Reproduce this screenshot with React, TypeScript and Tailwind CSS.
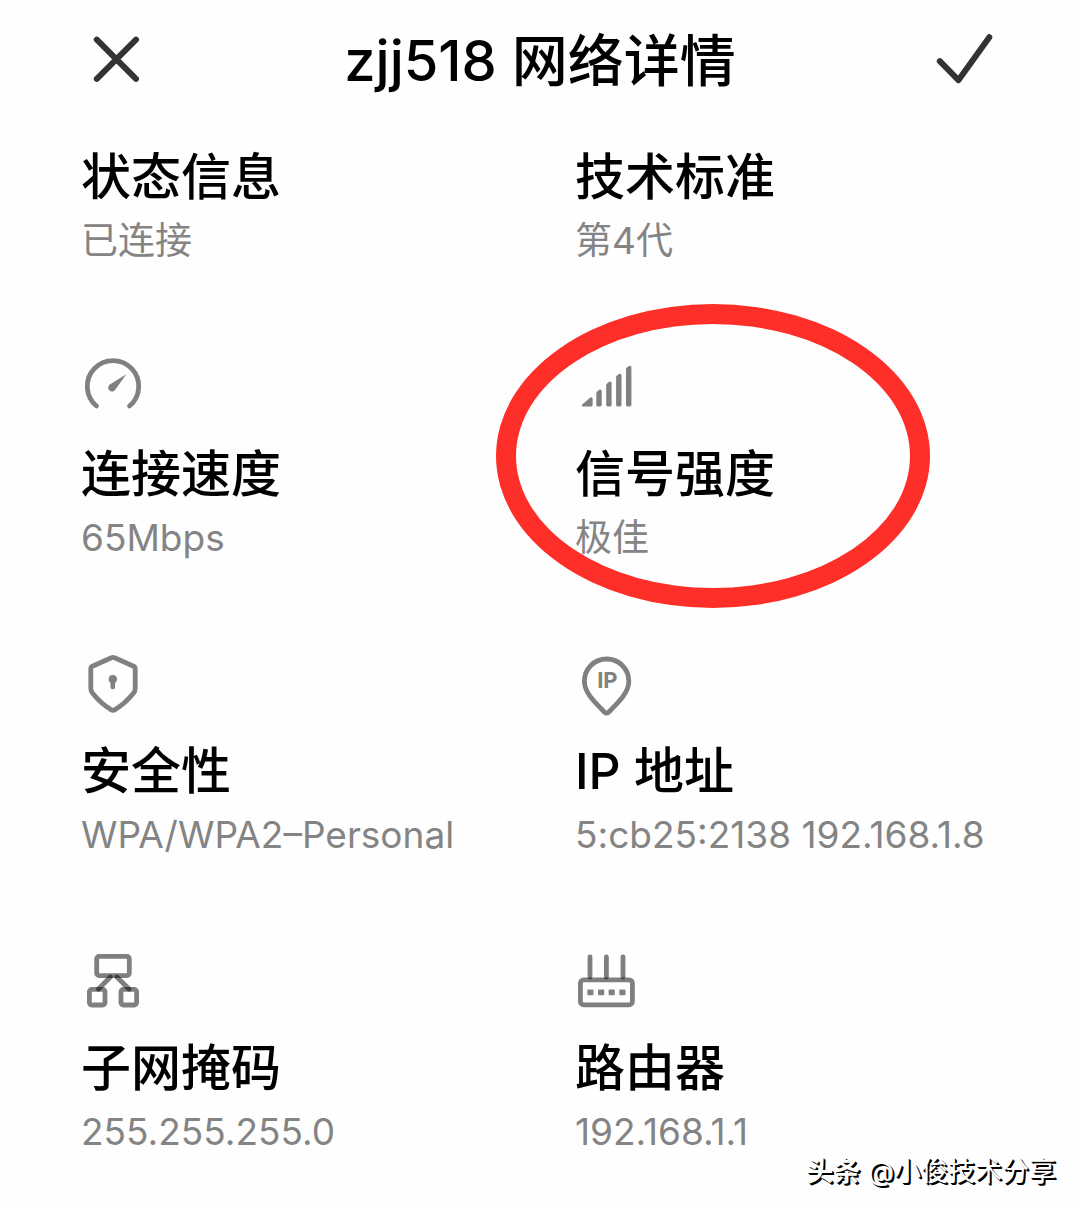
import type { ReactNode } from 'react';

type Detail = {
  title: string;
  value: string;
  icon?: ReactNode;
  highlighted?: boolean;
};

const iconProps = {
  viewBox: '0 0 64 64',
  fill: 'none',
  'aria-hidden': true,
  className: 'block size-16 overflow-visible',
} as const;

function GaugeIcon() {
  return (
    <svg {...iconProps}>
      <path d="M15.5 52A25.7 25.7 0 1 1 48.5 52" stroke="#808080" strokeWidth="4.8" strokeLinecap="round" />
      <path d="M45.3 20.3L34.4 35.4A3.8 3.8 0 1 1 28.8 30.6Z" fill="#808080" />
    </svg>
  );
}

function SignalIcon() {
  return (
    <svg {...iconProps} fill="#808080">
      <path d="M7.2 50.4L15.4 43.6Q17.6 42.4 17.6 45V51Q17.6 52.4 16.2 52.4H8Q6 52 7.2 50.4Z" />
      <path d="M21.3 39.2Q21.3 38.2 22.2 37.4L24.2 35.8Q26.7 34.8 26.7 37.4V51Q26.7 52.4 25.3 52.4H22.7Q21.3 52.4 21.3 51Z" />
      <path d="M31.2 31.2Q31.2 30.2 32.1 29.4L34.1 27.8Q36.6 26.8 36.6 29.4V51Q36.6 52.4 35.2 52.4H32.6Q31.2 52.4 31.2 51Z" />
      <path d="M41.1 23.4Q41.1 22.4 42 21.6L44 20Q46.5 19 46.5 21.6V51Q46.5 52.4 45.1 52.4H42.5Q41.1 52.4 41.1 51Z" />
      <path d="M51 15.4Q51 14.4 51.9 13.6L53.9 12Q56.4 11 56.4 13.6V51Q56.4 52.4 55 52.4H52.4Q51 52.4 51 51Z" />
    </svg>
  );
}

function ShieldIcon() {
  return (
    <svg {...iconProps}>
      <path
        d="M30.4 6.8Q32 6 33.6 6.8L52.6 15.2Q54.2 16 54.2 17.8V37.5Q54.2 40 52.6 42C47 49 41 54.5 34 58.6Q32 59.8 30 58.6C23 54.5 17 49 11.4 42Q9.8 40 9.8 37.5V17.8Q9.8 16 11.4 15.2Z"
        stroke="#808080"
        strokeWidth="4.8"
        strokeLinejoin="round"
      />
      <circle cx="31.8" cy="28.2" r="4.1" fill="#808080" />
      <path d="M31.8 29V36" stroke="#808080" strokeWidth="4.6" strokeLinecap="round" />
    </svg>
  );
}

function IpPinIcon() {
  return (
    <svg {...iconProps}>
      <path
        d="M31.6 8C19.2 8 9.4 17.8 9.4 30.2C9.4 42 20 51.5 29.6 61.2Q31.6 63 33.6 61.2C43.2 51.5 53.8 42 53.8 30.2C53.8 17.8 44 8 31.6 8Z"
        stroke="#808080"
        strokeWidth="4.8"
      />
      <text x="32.4" y="37" textAnchor="middle" fill="#808080" className="text-[22px] font-bold">
        IP
      </text>
    </svg>
  );
}

function SubnetIcon() {
  return (
    <svg {...iconProps} stroke="#000" strokeOpacity="0.5" strokeWidth="4.8">
      <rect x="15.7" y="8.4" width="32.6" height="19.2" rx="2.4" />
      <rect x="8.4" y="41.4" width="15.6" height="15.6" rx="2.4" />
      <rect x="40" y="41.4" width="15.6" height="15.6" rx="2.4" />
      <path d="M29.4 29L17.4 41" strokeLinecap="round" />
      <path d="M35.8 29L48 41" strokeLinecap="round" />
    </svg>
  );
}

function RouterIcon() {
  return (
    <svg {...iconProps} stroke="#000" strokeOpacity="0.5" strokeWidth="4.8">
      <rect x="5.4" y="31.8" width="52" height="25" rx="3.4" />
      <path d="M15 9V29" strokeLinecap="round" />
      <path d="M31.4 9V29" strokeLinecap="round" />
      <path d="M48 9V29" strokeLinecap="round" />
      <g fill="#808080" stroke="none">
        <rect x="12.3" y="41.4" width="6.2" height="5.8" rx="1" />
        <rect x="23" y="41.4" width="6.2" height="5.8" rx="1" />
        <rect x="33.6" y="41.4" width="6.2" height="5.8" rx="1" />
        <rect x="44.3" y="41.4" width="6.2" height="5.8" rx="1" />
      </g>
    </svg>
  );
}

const details: Detail[] = [
  { title: '状态信息', value: '已连接' },
  { title: '技术标准', value: '第4代' },
  { title: '连接速度', value: '65Mbps', icon: <GaugeIcon /> },
  { title: '信号强度', value: '极佳', icon: <SignalIcon />, highlighted: true },
  { title: '安全性', value: 'WPA/WPA2–Personal', icon: <ShieldIcon /> },
  { title: 'IP 地址', value: '5:cb25:2138 192.168.1.8', icon: <IpPinIcon /> },
  { title: '子网掩码', value: '255.255.255.0', icon: <SubnetIcon /> },
  { title: '路由器', value: '192.168.1.1', icon: <RouterIcon /> },
];

function DetailItem({ title, value, icon, highlighted }: Detail) {
  return (
    <section className="relative min-w-0 whitespace-nowrap">
      {icon && <div className="mb-[26px]">{icon}</div>}
      <h2 className="text-[50px] leading-[60px] font-medium text-black">{title}</h2>
      <p className="mt-2.5 text-[37px] leading-[48px] text-[#848484]">{value}</p>
      {highlighted && (
        <div className="pointer-events-none absolute -top-[50px] -left-[79px] h-[304px] w-[434px] rounded-[50%] border-20 border-[#fe2f28]" />
      )}
    </section>
  );
}

export default function App() {
  return (
    <div className="relative min-h-screen bg-[#fefefe] font-[Inter,'Noto_Sans_CJK_SC',sans-serif]">
      <header className="flex h-[122px] items-center justify-between px-[84px]">
        <button type="button" aria-label="关闭">
          <svg {...iconProps} stroke="#333" strokeWidth="6" strokeLinecap="round">
            <path d="M12.8 10.6L52 49.8M52 10.6L12.8 49.8" />
          </svg>
        </button>
        <h1 className="text-[56px] leading-16 font-medium text-black">zjj518 网络详情</h1>
        <button type="button" aria-label="确定">
          <svg {...iconProps} stroke="#333" strokeWidth="6" strokeLinecap="round" strokeLinejoin="round">
            <path d="M7.8 32.2L26.4 51.2L57.3 8.2" />
          </svg>
        </button>
      </header>

      <main className="grid grid-cols-2 gap-x-[70px] gap-y-[89px] px-[81px] pt-[25px] pb-12">
        {details.map((item) => (
          <DetailItem key={item.title} {...item} />
        ))}
      </main>

      <div className="absolute right-6 bottom-4 text-[27px] leading-10 text-white [text-shadow:1px_1px_0_#000,2px_2px_0_#000]">
        <span className="font-bold">头条</span> @小俊技术分享
      </div>
    </div>
  );
}
